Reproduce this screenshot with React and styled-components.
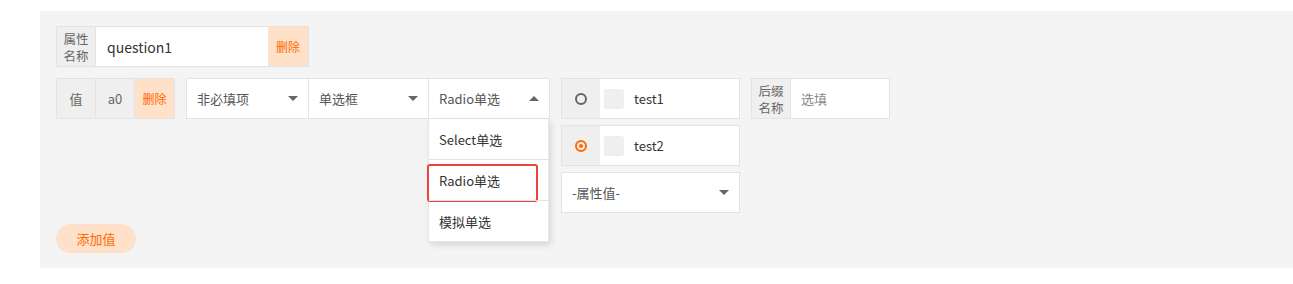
import React from 'react';
import styled, { createGlobalStyle } from 'styled-components';

const GlobalStyle = createGlobalStyle`
  html, body {
    margin: 0;
    background: #fff;
    font-family: "Noto Sans CJK SC", "Liberation Sans", sans-serif;
    font-size: 13px;
    color: #333;
  }
`;

const Panel = styled.div`
  margin: 11px 0 0 40px;
  height: 257px;
  box-sizing: border-box;
  background: #f4f4f4;
  padding: 15px 16px;
`;

const Row = styled.div`
  display: flex;
  align-items: flex-start;
  gap: ${p => p.gap || 0}px;
  margin-bottom: 11px;
`;

const Group = styled.div`
  display: flex;
  height: 41px;
  box-sizing: border-box;
  border: 1px solid #e3e3e3;
  background: #fff;
`;

const Label = styled.div`
  width: ${p => p.w || 38}px;
  flex: none;
  display: flex;
  flex-direction: column;
  align-items: center;
  justify-content: center;
  background: #efefef;
  color: #666;
  font-size: 13px;
  text-align: center;
  border-right: 1px solid #e3e3e3;
`;

const LabelLine = styled.span`
  display: block;
  line-height: 17px;
  height: 17px;
  font-size: 12.5px;
`;

const Input = styled.div`
  width: ${p => p.w}px;
  display: flex;
  align-items: center;
  padding-left: ${p => p.pl || 10}px;
  box-sizing: border-box;
  font-size: ${p => p.fs || 13}px;
  color: ${p => (p.placeholder ? '#888' : '#333')};
`;

const DeleteBtn = styled.div`
  width: ${p => p.w || 39}px;
  display: flex;
  align-items: center;
  justify-content: center;
  background: #ffe0c9;
  color: #ff6a00;
  font-size: 12px;
`;

const Selects = styled.div`
  display: flex;
  position: relative;
  border: 1px solid #e3e3e3;
  background: #fff;
  height: 41px;
  box-sizing: border-box;
`;

const Select = styled.div`
  width: ${p => p.w || 120}px;
  display: flex;
  align-items: center;
  justify-content: space-between;
  padding: 0 10px;
  box-sizing: border-box;
  color: #555;
  border-left: ${p => (p.first ? 'none' : '1px solid #e3e3e3')};
  position: relative;
`;

const Caret = styled.span`
  width: 0;
  height: 0;
  border-left: 5px solid transparent;
  border-right: 5px solid transparent;
  ${p => (p.up ? 'border-bottom: 5px solid #666;' : 'border-top: 5px solid #666;')}
`;

const Dropdown = styled.div`
  position: absolute;
  top: 40px;
  left: -1px;
  width: 121px;
  background: #fff;
  border: 1px solid #e6e6e6;
  border-top: none;
  box-shadow: 2px 3px 6px rgba(0, 0, 0, 0.12);
  z-index: 2;
  box-sizing: border-box;
`;

const Option = styled.div`
  height: 40px;
  display: flex;
  align-items: center;
  padding-left: 10px;
  color: #333;
  border-top: ${p => (p.first ? 'none' : '1px solid #e3e3e3')};
  position: relative;
`;

const Highlight = styled.div`
  position: absolute;
  left: -2px;
  top: 4px;
  width: 111px;
  height: 38px;
  box-sizing: border-box;
  border: 2px solid #e8463d;
  border-radius: 3px;
`;

const Column = styled.div`
  display: flex;
  flex-direction: column;
  gap: 6px;
  width: 179px;
`;

const RadioRow = styled(Group)`
  width: 179px;
  align-items: stretch;
`;

const RadioCell = styled.div`
  width: 38px;
  flex: none;
  display: flex;
  align-items: center;
  justify-content: center;
  background: #efefef;
`;

const RadioDot = styled.span`
  width: 12px;
  height: 12px;
  border-radius: 50%;
  box-sizing: border-box;
  border: 2px solid ${p => (p.checked ? '#ff6a00' : '#666')};
  display: flex;
  align-items: center;
  justify-content: center;
  &::after {
    content: '';
    width: 4px;
    height: 4px;
    border-radius: 50%;
    background: ${p => (p.checked ? '#ff6a00' : 'transparent')};
  }
`;

const Thumb = styled.span`
  width: 20px;
  height: 20px;
  border-radius: 3px;
  background: #efefef;
  margin: 0 10px 0 4px;
  align-self: center;
`;

const RadioText = styled.span`
  align-self: center;
  color: #333;
`;

const AttrSelect = styled(Group)`
  width: 179px;
  align-items: center;
  justify-content: space-between;
  padding: 0 10px;
  color: #555;
`;

const AddBtn = styled.div`
  width: 80px;
  height: 29px;
  border-radius: 15px;
  background: #ffe0c9;
  color: #ff6a00;
  display: flex;
  align-items: center;
  justify-content: center;
  font-size: 13px;
`;

export default function App() {
  return (
    <>
      <GlobalStyle />
      <Panel>
        <Row>
          <Group>
            <Label><LabelLine>属性</LabelLine><LabelLine>名称</LabelLine></Label>
            <Input w={172} fs={14} pl={11}>question1</Input>
            <DeleteBtn w={40}>删除</DeleteBtn>
          </Group>
        </Row>
        <Row gap={11}>
          <Group>
            <Label>值</Label>
            <Label>a0</Label>
            <DeleteBtn>删除</DeleteBtn>
          </Group>
          <Selects>
            <Select first w={121}>非必填项<Caret /></Select>
            <Select>单选框<Caret /></Select>
            <Select w={121}>
              Radio单选<Caret up />
              <Dropdown>
                <Option first>Select单选</Option>
                <Option>Radio单选<Highlight /></Option>
                <Option>模拟单选</Option>
              </Dropdown>
            </Select>
          </Selects>
          <Column>
            <RadioRow>
              <RadioCell><RadioDot /></RadioCell>
              <Thumb />
              <RadioText>test1</RadioText>
            </RadioRow>
            <RadioRow>
              <RadioCell><RadioDot checked /></RadioCell>
              <Thumb />
              <RadioText>test2</RadioText>
            </RadioRow>
            <AttrSelect>-属性值-<Caret /></AttrSelect>
          </Column>
          <Group>
            <Label><LabelLine>后缀</LabelLine><LabelLine>名称</LabelLine></Label>
            <Input w={98} placeholder>选填</Input>
          </Group>
        </Row>
        <AddBtn>添加值</AddBtn>
      </Panel>
    </>
  );
}
